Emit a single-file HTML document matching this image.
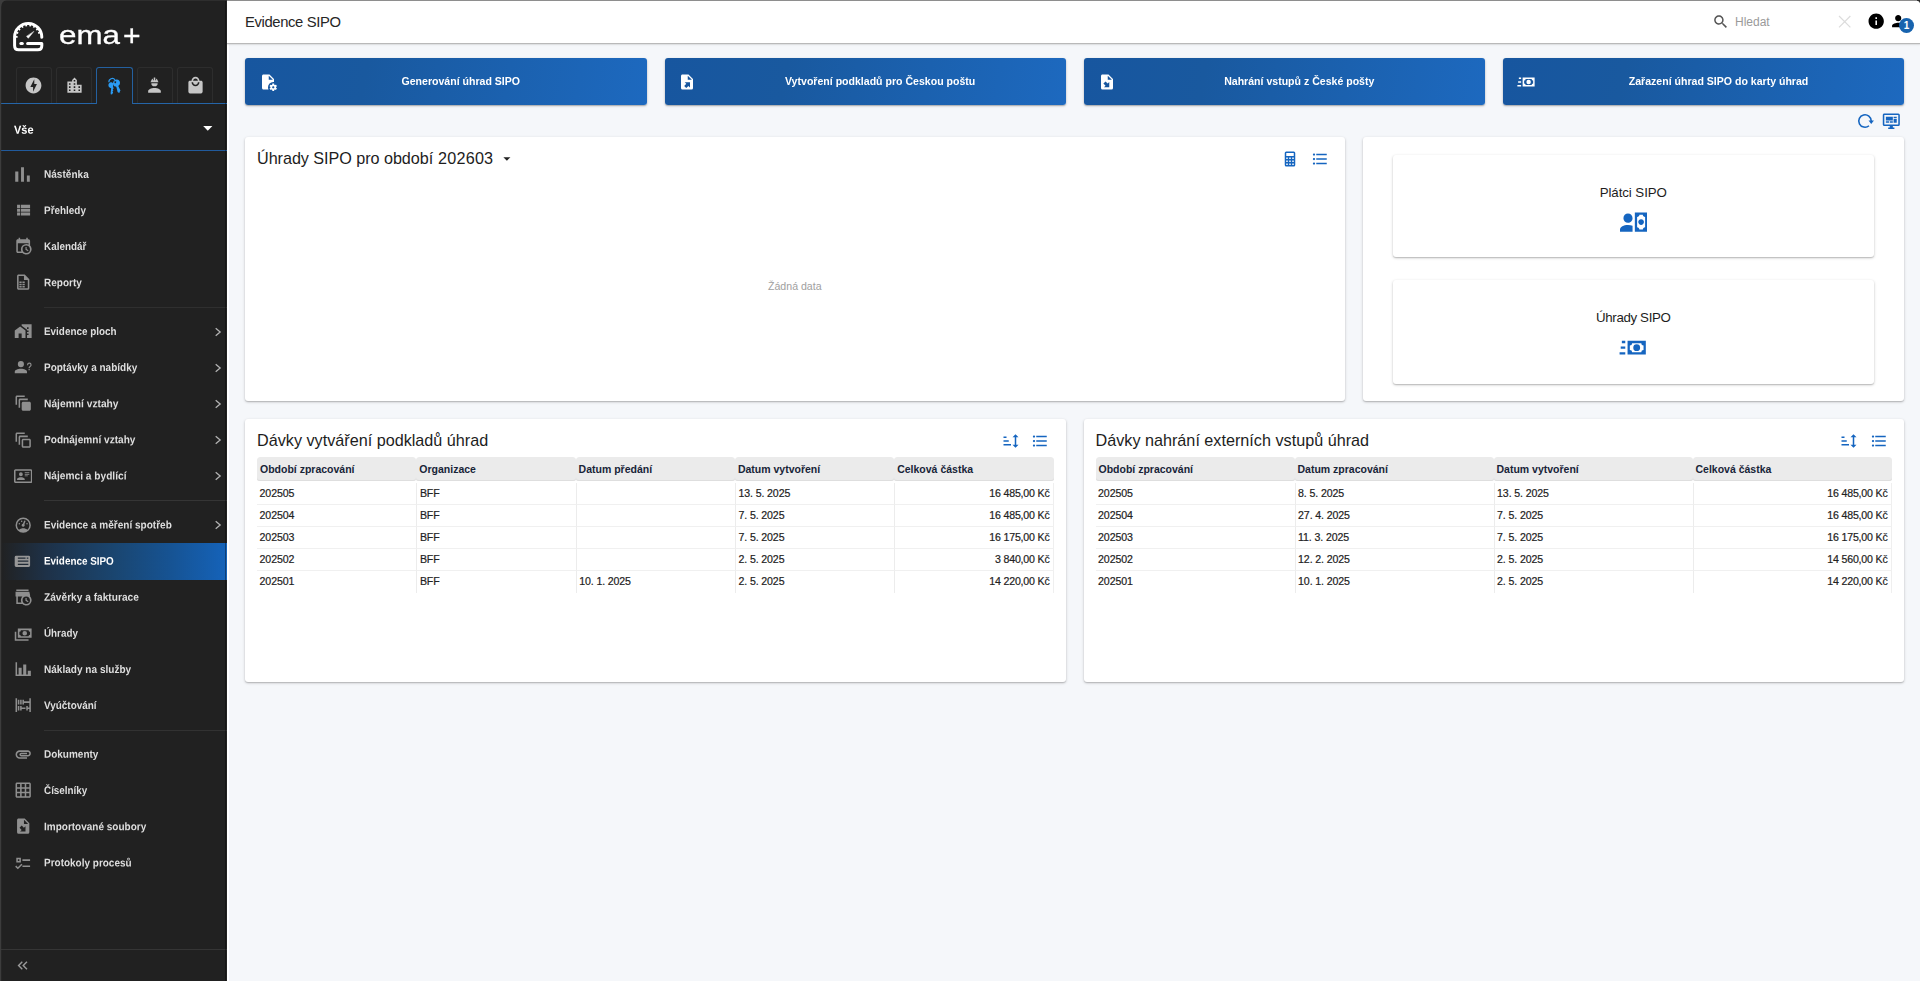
<!DOCTYPE html><html lang="cs"><head><meta charset="utf-8"><title>Evidence SIPO</title><style>
*{box-sizing:border-box;margin:0;padding:0}
html,body{width:1920px;height:981px;overflow:hidden}
body{background:#f5f7fa;font-family:"Liberation Sans",sans-serif;color:#1d1d1d;position:relative}
.i{position:absolute;display:block}
.abs{position:absolute}
.t{position:absolute;white-space:nowrap;line-height:1;transform-origin:left center}
#side{position:absolute;left:0;top:0;width:227.2px;height:981px;background:#212121;overflow:hidden;filter:opacity(1)}
#frame{position:absolute;left:0;top:0;width:1920px;height:981px;pointer-events:none}
.mi{position:absolute;left:43.6px;color:#dedede;font-weight:700;font-size:11px;line-height:14px;height:14px;white-space:nowrap;transform-origin:left center;transform:scaleX(.905)}
.sep{position:absolute;left:43.7px;right:0;height:1.1px;background:#343434}
.chev{position:absolute;left:213.9px;width:8px;height:12px}
#top{position:absolute;left:227px;top:1px;width:1693px;height:41.5px;background:#fff;box-shadow:0 1.2px 0 #b9b9b9,0 2px 2px rgba(0,0,0,.07)}
.btn{position:absolute;top:58.4px;height:46.9px;width:401.2px;border-radius:3px;background:linear-gradient(100deg,#17569f 0%,#19599f 30%,#1d69bf 100%);box-shadow:0 1px 2.5px rgba(0,0,0,.24),0 1px 1px rgba(0,0,0,.14);color:#fff}
.btn .lbl{position:absolute;left:30px;right:0;top:0;height:100%;display:flex;align-items:center;justify-content:center;font-weight:700;font-size:11px;white-space:nowrap;padding-bottom:2.2px}
.btn .lbl span{display:inline-block;transform:scaleX(.96)}
.card{position:absolute;background:#fff;border-radius:3px;box-shadow:0 1px 3px rgba(0,0,0,.22),0 1px 1px rgba(0,0,0,.12)}
.h{position:absolute;font-size:16.2px;line-height:20px;color:#1d1d1d;white-space:nowrap}
table{border-collapse:separate;border-spacing:0;position:absolute;table-layout:fixed;font-size:10.6px;letter-spacing:-.12px;color:#222}
th{background:#ebebeb;background-clip:padding-box;text-align:left;font-weight:700;height:25.5px;padding:0 3px 0.5px 3px;border-radius:3px 3px 3px 3px;border-bottom:2px solid transparent;box-shadow:inset 0 -1px 0 #dedede;font-size:10.5px;letter-spacing:0;color:#182438;white-space:nowrap}
td{height:22px;padding:0 3px 0 2.6px;-webkit-text-stroke:.2px #222;border-bottom:1px solid #f0f0f0;border-left:1px solid #ececec;white-space:nowrap}
td:first-child{border-left:none}
tr:last-child td{border-bottom:none;height:22.6px;padding-bottom:1.6px}
td.r{text-align:right;word-spacing:.2px;letter-spacing:-.22px;border-right:1px solid #efefef}
</style></head><body>
<div class="abs" style="left:227px;top:43px;width:2.6px;height:938px;background:linear-gradient(90deg,#fff 0%,#fff 65%,#f1f2f8 85%,#f5f7fa 100%)"></div>
<div id="top"></div>
<div class="t" style="left:245px;top:15.1px;font-size:14.8px;letter-spacing:-.36px;color:#262626">Evidence SIPO</div>
<svg class="i" style="left:1712.25px;top:12.75px;width:17.5px;height:17.5px" viewBox="0 0 24 24" fill="#555"><path d="M15.5 14h-.79l-.28-.27C15.41 12.59 16 11.11 16 9.5 16 5.91 13.09 3 9.5 3S3 5.91 3 9.5 5.91 16 9.5 16c1.61 0 3.09-.59 4.23-1.57l.27.28v.79l5 4.99L20.49 19l-4.99-5zm-6 0C7.01 14 5 11.99 5 9.5S7.01 5 9.5 5 14 7.01 14 9.5 11.99 14 9.5 14z"/></svg>
<div class="t" style="left:1735px;top:16px;font-size:12px;color:#9a9a9a">Hledat</div>
<svg class="i" style="left:1838px;top:15.2px;width:13.4px;height:13.4px" viewBox="0 0 13 13"><path d="M1 1L12 12M12 1L1 12" stroke="#dcdcdc" stroke-width="1.2" fill="none"/></svg>
<svg class="i" style="left:1867.10px;top:12.40px;width:18.4px;height:18.4px" viewBox="0 0 24 24" fill="#000"><path d="M12 2C6.48 2 2 6.48 2 12s4.48 10 10 10 10-4.48 10-10S17.52 2 12 2zm1 15h-2v-6h2v6zm0-8h-2V7h2v2z"/></svg>
<svg class="i" style="left:1888.80px;top:12.30px;width:18.4px;height:18.4px" viewBox="0 0 24 24" fill="#000"><path d="M12 12c2.21 0 4-1.79 4-4s-1.79-4-4-4-4 1.79-4 4 1.79 4 4 4zm0 2c-2.67 0-8 1.34-8 4v2h16v-2c0-2.66-5.33-4-8-4z"/></svg>
<div class="abs" style="left:1898.9px;top:17.9px;width:15.3px;height:15.3px;border-radius:8px;background:#1763ae;color:#fff;font-size:10px;font-weight:700;text-align:center;line-height:15.6px">1</div>
<div class="btn" style="left:245.4px"><svg class="i" style="left:13.60px;top:14.30px;width:18px;height:18px" viewBox="0 0 24 24" fill="#fff"><path d="M6 2C4.89 2 4 2.89 4 4V20C4 21.11 4.89 22 6 22H12.68A7 7 0 0 1 12 19A7 7 0 0 1 19 12A7 7 0 0 1 20 12.08V8L14 2H6M13 3.5L18.5 9H13V3.5M18 14C17.87 14 17.76 14.09 17.74 14.21L17.55 15.53C17.25 15.66 16.96 15.82 16.7 16L15.46 15.5C15.35 15.5 15.22 15.5 15.15 15.63L14.15 17.36C14.09 17.47 14.11 17.6 14.21 17.68L15.27 18.5C15.25 18.67 15.24 18.83 15.24 19C15.24 19.17 15.25 19.33 15.27 19.5L14.21 20.32C14.12 20.4 14.09 20.53 14.15 20.64L15.15 22.37C15.21 22.5 15.34 22.5 15.46 22.5L16.7 22C16.96 22.18 17.24 22.35 17.55 22.47L17.74 23.79C17.76 23.91 17.86 24 18 24H20C20.11 24 20.22 23.91 20.24 23.79L20.43 22.47C20.73 22.34 21 22.18 21.27 22L22.5 22.5C22.63 22.5 22.76 22.5 22.83 22.37L23.83 20.64C23.89 20.53 23.86 20.4 23.77 20.32L22.7 19.5C22.72 19.33 22.74 19.17 22.74 19C22.74 18.83 22.73 18.67 22.7 18.5L23.76 17.68C23.85 17.6 23.88 17.47 23.82 17.36L22.82 15.63C22.76 15.5 22.63 15.5 22.5 15.5L21.27 16C21 15.82 20.73 15.65 20.42 15.53L20.23 14.21C20.22 14.09 20.11 14 20 14H18M19 17.5C19.83 17.5 20.5 18.17 20.5 19C20.5 19.83 19.83 20.5 19 20.5C18.16 20.5 17.5 19.83 17.5 19C17.5 18.17 18.17 17.5 19 17.5Z"/></svg><div class="lbl"><span>Generování úhrad SIPO</span></div></div>
<div class="btn" style="left:664.8px"><svg class="i" style="left:13.60px;top:14.30px;width:18px;height:18px" viewBox="0 0 24 24" fill="#fff"><path d="M6,2C4.89,2 4,2.9 4,4V20A2,2 0 0,0 6,22H18A2,2 0 0,0 20,20V8L14,2M13,3.5L18.5,9H13M8.93,12.22H16V19.29L13.88,17.17L11.05,20L8.22,17.17L11.05,14.35"/></svg><div class="lbl"><span>Vytvoření podkladů pro Českou poštu</span></div></div>
<div class="btn" style="left:1084px"><svg class="i" style="left:13.60px;top:14.30px;width:18px;height:18px" viewBox="0 0 24 24" fill="#fff"><path d="M6,2C4.89,2 4,2.9 4,4V20A2,2 0 0,0 6,22H18A2,2 0 0,0 20,20V8L14,2M13,3.5L18.5,9H13M10.05,11.22L12.88,14.05L15,11.93V19H7.93L10.05,16.88L7.22,14.05"/></svg><div class="lbl"><span>Nahrání vstupů z České pošty</span></div></div>
<div class="btn" style="left:1503px"><svg class="i" style="left:13.60px;top:14.30px;width:18px;height:18px" viewBox="0 0 24 24" fill="#fff"><path d="M7.5,6H23.5V18H7.5V6M15.5,9A3,3 0 0,1 18.5,12A3,3 0 0,1 15.5,15A3,3 0 0,1 12.5,12A3,3 0 0,1 15.5,9M11.5,8A2,2 0 0,1 9.5,10V14A2,2 0 0,1 11.5,16H19.5A2,2 0 0,1 21.5,14V10A2,2 0 0,1 19.5,8H11.5M2.5,6H5.5V8H2.5V6M1.5,11H5.5V13H1.5V11M0.5,16H5.5V18H0.5V16Z"/></svg><div class="lbl"><span>Zařazení úhrad SIPO do karty úhrad</span></div></div>
<svg class="i" style="left:1856.00px;top:111.70px;width:18px;height:18px" viewBox="0 0 24 24" fill="#1565c0"><path d="M17.34 18.36A8.3 8.3 0 1 1 20.3 12" fill="none" stroke="#1565c0" stroke-width="2.1"/><path d="M16.7 11.3H23.9L20.3 16z"/></svg>
<svg class="i" style="left:1882.10px;top:111.60px;width:18.6px;height:18.6px" viewBox="0 0 24 24" fill="#1565c0"><path d="M21,16V4H3V16H21M21,2A2,2 0 0,1 23,4V16A2,2 0 0,1 21,18H14V20H16V22H8V20H10V18H3C1.89,18 1,17.1 1,16V4C1,2.89 1.89,2 3,2H21M5,6H14V11H5V6M15,6H19V8H15V6M19,9V14H15V9H19M5,12H9V14H5V12M10,12H14V14H10V12Z"/></svg>
<div class="card" style="left:245px;top:136.9px;width:1100.2px;height:263.9px"></div>
<div class="h" style="left:257px;top:148.1px"><span style="letter-spacing:-.05px">Úhrady SIPO pro období</span><span style="position:absolute;left:181px;top:0;letter-spacing:.22px">202603</span></div>
<svg class="i" style="left:503.4px;top:157.3px;width:7.8px;height:4.2px" viewBox="0 0 10 5"><path d="M0.5 0L5 4.6L9.5 0z" fill="#222"/></svg>
<svg class="i" style="left:1280.50px;top:150.00px;width:18px;height:18px" viewBox="0 0 24 24" fill="#1565c0"><path d="M7,2H17A2,2 0 0,1 19,4V20A2,2 0 0,1 17,22H7A2,2 0 0,1 5,20V4A2,2 0 0,1 7,2M7,4V8H17V4H7M7,10V12H9V10H7M11,10V12H13V10H11M15,10V12H17V10H15M7,14V16H9V14H7M11,14V16H13V14H11M15,14V16H17V14H15M7,18V20H9V18H7M11,18V20H13V18H11M15,18V20H17V18H15Z"/></svg>
<svg class="i" style="left:1310.50px;top:150.00px;width:18px;height:18px" viewBox="0 0 24 24" fill="#1565c0"><path d="M4 10.5c-.83 0-1.5.67-1.5 1.5s.67 1.5 1.5 1.5 1.5-.67 1.5-1.5-.67-1.5-1.5-1.5zm0-6c-.83 0-1.5.67-1.5 1.5S3.17 7.5 4 7.5 5.500 6.83 5.5 6 4.83 4.5 4 4.5zm0 12c-.83 0-1.5.68-1.5 1.5s.68 1.5 1.5 1.5 1.5-.68 1.5-1.5-.67-1.5-1.5-1.5zM7 19h14v-2H7v2zm0-6h14v-2H7v2zm0-8v2h14V5H7z"/></svg>
<div class="t" style="left:768px;top:281px;font-size:10.6px;color:#a0a0a0">Žádná data</div>
<div class="card" style="left:1363px;top:136.9px;width:540.7px;height:263.9px"></div>
<div class="card" style="left:1393px;top:154.5px;width:480.5px;height:102.9px"></div>
<div class="card" style="left:1393px;top:280.2px;width:480.5px;height:103.4px"></div>
<div class="abs" style="left:1393px;width:480.5px;top:184.7px;text-align:center;font-size:13.3px;letter-spacing:-.08px;line-height:16px;color:#1d1d1d">Plátci SIPO</div>
<svg class="i" style="left:1619.80px;top:208.90px;width:27.4px;height:27.4px" viewBox="0 0 24 24" fill="#1565c0"><path d="M11 8C11 10.21 9.21 12 7 12C4.79 12 3 10.21 3 8C3 5.79 4.79 4 7 4C9.21 4 11 5.79 11 8M11 14.72V20H0V18C0 15.79 3.13 14 7 14C8.5 14 9.87 14.27 11 14.72M24 20H13V3H24V20M16 11.5C16 10.12 17.12 9 18.5 9C19.88 9 21 10.12 21 11.5C21 12.88 19.88 14 18.5 14C17.12 14 16 12.88 16 11.5M22 7C20.9 7 20 6.11 20 5H17C17 6.11 16.11 7 15 7V16C16.11 16 17 16.9 17 18H20C20 16.9 20.9 16 22 16V7Z"/></svg>
<div class="abs" style="left:1393px;width:480.5px;top:309.7px;text-align:center;font-size:13.3px;letter-spacing:-.35px;line-height:16px;color:#1d1d1d">Úhrady SIPO</div>
<svg class="i" style="left:1619.20px;top:334.40px;width:27.4px;height:27.4px" viewBox="0 0 24 24" fill="#1565c0"><path d="M7.5,6H23.5V18H7.5V6M15.5,9A3,3 0 0,1 18.5,12A3,3 0 0,1 15.5,15A3,3 0 0,1 12.5,12A3,3 0 0,1 15.5,9M11.5,8A2,2 0 0,1 9.5,10V14A2,2 0 0,1 11.5,16H19.5A2,2 0 0,1 21.5,14V10A2,2 0 0,1 19.5,8H11.5M2.5,6H5.5V8H2.5V6M1.5,11H5.5V13H1.5V11M0.5,16H5.5V18H0.5V16Z"/></svg>
<div class="card" style="left:245px;top:418.6px;width:821px;height:263.6px"></div>
<div class="card" style="left:1084px;top:418.6px;width:819.7px;height:263.6px"></div>
<div class="h" style="left:257px;top:430px">Dávky vytváření podkladů úhrad</div>
<div class="h" style="left:1095.5px;top:430px">Dávky nahrání externích vstupů úhrad</div>
<svg class="i" style="left:1001.50px;top:431.50px;width:18px;height:18px" viewBox="0 0 24 24" fill="#1565c0"><path d="M2,6H6V8H2V6M2,11H9V13H2V11M2,16H12V18H2V16M18,3L22,7H19V17H22L18,21L14,17H17V7H14L18,3Z"/></svg>
<svg class="i" style="left:1031.00px;top:431.50px;width:18px;height:18px" viewBox="0 0 24 24" fill="#1565c0"><path d="M4 10.5c-.83 0-1.5.67-1.5 1.5s.67 1.5 1.5 1.5 1.5-.67 1.5-1.5-.67-1.5-1.5-1.5zm0-6c-.83 0-1.5.67-1.5 1.5S3.17 7.5 4 7.5 5.500 6.83 5.5 6 4.83 4.5 4 4.5zm0 12c-.83 0-1.5.68-1.5 1.5s.68 1.5 1.5 1.5 1.5-.68 1.5-1.5-.67-1.5-1.5-1.5zM7 19h14v-2H7v2zm0-6h14v-2H7v2zm0-8v2h14V5H7z"/></svg>
<svg class="i" style="left:1840.00px;top:431.50px;width:18px;height:18px" viewBox="0 0 24 24" fill="#1565c0"><path d="M2,6H6V8H2V6M2,11H9V13H2V11M2,16H12V18H2V16M18,3L22,7H19V17H22L18,21L14,17H17V7H14L18,3Z"/></svg>
<svg class="i" style="left:1869.50px;top:431.50px;width:18px;height:18px" viewBox="0 0 24 24" fill="#1565c0"><path d="M4 10.5c-.83 0-1.5.67-1.5 1.5s.67 1.5 1.5 1.5 1.5-.67 1.5-1.5-.67-1.5-1.5-1.5zm0-6c-.83 0-1.5.67-1.5 1.5S3.17 7.5 4 7.5 5.500 6.83 5.5 6 4.83 4.5 4 4.5zm0 12c-.83 0-1.5.68-1.5 1.5s.68 1.5 1.5 1.5 1.5-.68 1.5-1.5-.67-1.5-1.5-1.5zM7 19h14v-2H7v2zm0-6h14v-2H7v2zm0-8v2h14V5H7z"/></svg>
<table style="left:257px;top:457px;width:796.5px"><thead><tr><th>Období zpracování</th><th>Organizace</th><th>Datum předání</th><th>Datum vytvoření</th><th>Celková částka</th></tr></thead><tbody><tr><td>202505</td><td>BFF</td><td></td><td>13. 5. 2025</td><td class=r>16 485,00 Kč</td></tr><tr><td>202504</td><td>BFF</td><td></td><td>7. 5. 2025</td><td class=r>16 485,00 Kč</td></tr><tr><td>202503</td><td>BFF</td><td></td><td>7. 5. 2025</td><td class=r>16 175,00 Kč</td></tr><tr><td>202502</td><td>BFF</td><td></td><td>2. 5. 2025</td><td class=r>3 840,00 Kč</td></tr><tr><td>202501</td><td>BFF</td><td>10. 1. 2025</td><td>2. 5. 2025</td><td class=r>14 220,00 Kč</td></tr></tbody></table>
<table style="left:1095.5px;top:457px;width:796px"><thead><tr><th>Období zpracování</th><th>Datum zpracování</th><th>Datum vytvoření</th><th>Celková částka</th></tr></thead><tbody><tr><td>202505</td><td>8. 5. 2025</td><td>13. 5. 2025</td><td class=r>16 485,00 Kč</td></tr><tr><td>202504</td><td>27. 4. 2025</td><td>7. 5. 2025</td><td class=r>16 485,00 Kč</td></tr><tr><td>202503</td><td>11. 3. 2025</td><td>7. 5. 2025</td><td class=r>16 175,00 Kč</td></tr><tr><td>202502</td><td>12. 2. 2025</td><td>2. 5. 2025</td><td class=r>14 560,00 Kč</td></tr><tr><td>202501</td><td>10. 1. 2025</td><td>2. 5. 2025</td><td class=r>14 220,00 Kč</td></tr></tbody></table>
<div id="side">
<svg class="i" style="left:8px;top:16px;width:44px;height:40px" viewBox="8 16 44 40" fill="none" stroke="#fff" stroke-width="3" stroke-linecap="round" stroke-linejoin="round"><path d="M41.8 37.3A13.6 13.6 0 0 0 14.6 36.8V45.8Q14.6 49.8 18.6 49.8H37.8Q41.8 49.8 41.8 45.8V43.6H27.6"/><path d="M20.9 43.6H22.3"/><path d="M40.04 32.49L38.16 33.17M37.85 28.70L36.32 29.99M34.50 25.89L33.50 27.62M30.39 24.39L30.04 26.36M26.01 24.39L26.36 26.36M21.90 25.89L22.90 27.62M18.55 28.70L20.08 29.99M16.36 32.49L18.24 33.17M15.60 36.80L17.60 36.80" stroke-width="1.7" stroke-linecap="butt"/><path d="M26.7 36.5L28.3 38.3L33.6 31.7z" fill="#fff" stroke-width=".5"/></svg>
<div class="t" style="left:58.6px;top:23.2px;font-size:25.6px;color:#fff;-webkit-text-stroke:.3px #fff;transform:scaleX(1.225)">ema<span style="display:inline-block;margin-left:2.7px;transform:translateY(1.1px) scale(.96,1.16)">+</span></div>
<div class="abs" style="left:15.95px;top:67.2px;width:35.7px;height:36px;border:1px solid #2d2d2d;border-bottom:none;border-radius:3px 3px 0 0"></div>
<svg class="i" style="left:24.45px;top:76.30px;width:19px;height:19px" viewBox="0 0 24 24" fill="#c6c6c6"><path d="M12 2.02c-5.51 0-9.98 4.47-9.98 9.98s4.47 9.98 9.98 9.98 9.98-4.47 9.98-9.98S17.51 2.02 12 2.02zM11.48 20v-6.26H8L13 4v6.26h3.35L11.48 20z"/></svg>
<div class="abs" style="left:56.2px;top:67.2px;width:35.7px;height:36px;border:1px solid #2d2d2d;border-bottom:none;border-radius:3px 3px 0 0"></div>
<svg class="i" style="left:64.70px;top:76.30px;width:19px;height:19px" viewBox="0 0 24 24" fill="#c6c6c6"><path d="M19,15H17V13H19M19,19H17V17H19M13,7H11V5H13M13,11H11V9H13M13,15H11V13H13M13,19H11V17H13M7,11H5V9H7M7,15H5V13H7M7,19H5V17H7M15,11V5L12,2L9,5V7H3V21H21V11H15Z"/></svg>
<div class="abs" style="left:96px;top:66.8px;width:36.8px;height:37.5px;border:1.6px solid #24609f;border-bottom:none;border-radius:3px 3px 0 0;background:#212121;z-index:2"></div>
<svg class="i" style="left:108.4px;top:76.6px;width:12.8px;height:18px;z-index:3" viewBox="0 0 12.8 18" fill="#2a9bf4"><path d="M.9 5.2A3.4 3.4 0 0 1 7 2.8" fill="none" stroke="#2a9bf4" stroke-width="1.1"/><path d="M2.9 5.2C4.4 4.9 5.3 6 5.2 7.4C5.1 8.5 4.9 9.3 5.3 10.2L5.6 11.6L4.7 12.4L5.4 13.4L4.5 14.3L5.1 15.4L4.2 17.3L2.9 17.6L2.6 16.2L3.2 11.3C1.4 10.9.3 9.6.4 8C.5 6.5 1.5 5.5 2.9 5.200z"/><path d="M8.200 2.600C10.400 2.200 12 3.800 12 5.800C12 7.300 11.300 8.300 10.300 8.900L12.500 13.600L11.700 14.400L12.200 15.200L10.600 15.800L9.600 14.900L8.500 10.400L8 9.600C6.300 9.500 5 8.200 5 6.400C5 4.400 6.300 2.900 8.200 2.600zM7.300 4.300A.9.9 0 1 0 7.310 4.300z" fill-rule="evenodd"/></svg>
<div class="abs" style="left:136.95px;top:67.2px;width:35.7px;height:36px;border:1px solid #2d2d2d;border-bottom:none;border-radius:3px 3px 0 0"></div>
<svg class="i" style="left:145.45px;top:76.30px;width:19px;height:19px" viewBox="0 0 24 24" fill="#c6c6c6"><path d="M12,15C7.58,15 4,16.79 4,19V21H20V19C20,16.79 16.42,15 12,15M8,9A4,4 0 0,0 12,13A4,4 0 0,0 16,9M11.5,2C11.2,2 11,2.21 11,2.5V5.5H10V3C10,3 7.75,3.86 7.75,6.75C7.75,6.75 7,6.89 7,8H17C16.95,6.89 16.25,6.75 16.25,6.75C16.25,3.86 14,3 14,3V5.5H13V2.5C13,2.21 12.81,2 12.5,2H11.5Z"/></svg>
<div class="abs" style="left:177.2px;top:67.2px;width:35.7px;height:36px;border:1px solid #2d2d2d;border-bottom:none;border-radius:3px 3px 0 0"></div>
<svg class="i" style="left:185.70px;top:76.30px;width:19px;height:19px" viewBox="0 0 24 24" fill="#c6c6c6"><path d="M19 6h-2c0-2.76-2.24-5-5-5S7 3.24 7 6H5c-1.1 0-1.99.9-1.99 2L3 20c0 1.1.9 2 2 2h14c1.1 0 2-.9 2-2V8c0-1.1-.9-2-2-2zm-7-3c1.66 0 3 1.34 3 3H9c0-1.66 1.34-3 3-3zm0 10c-2.76 0-5-2.24-5-5h2c0 1.66 1.34 3 3 3s3-1.34 3-3h2c0 2.76-2.24 5-5 5z"/></svg>
<div class="abs" style="left:0;top:102.8px;width:97.5px;height:1.5px;background:#2565a8"></div>
<div class="abs" style="left:131.5px;top:102.8px;width:96px;height:1.5px;background:#2565a8"></div>
<div class="t" style="left:13.6px;top:124px;font-size:11.8px;font-weight:700;color:#fff;transform:translateY(.7px) scaleX(.93) skewY(.05deg)">Vše</div>
<svg class="i" style="left:203.1px;top:125.7px;width:9.6px;height:5px" viewBox="0 0 10 5"><path d="M0.2 0L5 4.9L9.8 0z" fill="#fff"/></svg>
<div class="abs" style="left:0;top:149.6px;width:227px;height:1.2px;background:#215a9c"></div>
<div class="abs" style="left:0;top:543.1px;width:227px;height:36.6px;background:linear-gradient(90deg,#212121 0%,#1e3147 20%,#1a456f 50%,#165393 75%,#1563ba 100%)"></div>
<svg class="i" style="left:10.20px;top:161.75px;width:25px;height:25px" viewBox="0 0 24 24" fill="#8f8f8f"><path d="M5 9.2h3V19H5zM10.6 5h2.8v14h-2.8zm5.6 8H19v6h-2.8z"/></svg>
<div class="mi" style="top:166px;transform:translateY(0.85px) scaleX(0.915) skewY(.05deg);">Nástěnka</div>
<svg class="i" style="left:13.50px;top:201.25px;width:18.4px;height:18.4px" viewBox="0 0 24 24" fill="#8f8f8f"><path d="M4 14h4v-4H4v4zm0 5h4v-4H4v4zM4 9h4V5H4v4zm5 5h12v-4H9v4zm0 5h12v-4H9v4zM9 5v4h12V5H9z"/></svg>
<div class="mi" style="top:202px;transform:translateY(0.95px) scaleX(0.903) skewY(.05deg);">Přehledy</div>
<svg class="i" style="left:13.50px;top:237.35px;width:18.4px;height:18.4px" viewBox="0 0 24 24" fill="#8f8f8f"><path d="M15,13H16.5V15.82L18.94,17.23L18.19,18.53L15,16.69V13M19,8H5V19H9.67C9.24,18.09 9,17.07 9,16A7,7 0 0,1 16,9C17.07,9 18.09,9.24 19,9.67V8M5,21C3.89,21 3,20.1 3,19V5C3,3.89 3.89,3 5,3H6V1H8V3H16V1H18V3H19A2,2 0 0,1 21,5V11.1C22.24,12.36 23,14.09 23,16A7,7 0 0,1 16,23C14.09,23 12.36,22.24 11.1,21H5M16,11.15A4.85,4.85 0 0,0 11.15,16C11.15,18.68 13.32,20.85 16,20.85A4.85,4.85 0 0,0 20.85,16C20.85,13.32 18.68,11.15 16,11.15Z"/></svg>
<div class="mi" style="top:239px;transform:translateY(0.05px) scaleX(0.899) skewY(.05deg);">Kalendář</div>
<svg class="i" style="left:13.50px;top:273.45px;width:18.4px;height:18.4px" viewBox="0 0 24 24" fill="#8f8f8f"><path d="M14 2H6C4.89 2 4 2.9 4 4V20C4 21.11 4.89 22 6 22H18C19.11 22 20 21.11 20 20V8L14 2M18 20H6V4H13V9H18V20M10 13H7V11H10V13M14 13H11V11H14V13M10 16H7V14H10V16M14 16H11V14H14V16M10 19H7V17H10V19M14 19H11V17H14V19Z"/></svg>
<div class="mi" style="top:275px;transform:translateY(0.15px) scaleX(0.912) skewY(.05deg);">Reporty</div>
<svg class="i" style="left:13.50px;top:322.25px;width:18.4px;height:18.4px" viewBox="0 0 24 24" fill="#8f8f8f"><path d="M1,11v10h5v-6h4v6h5V11L8,6L1,11z M10,3v1.97l7,5V11h2v2h-2v2h2v2h-2v4h6V3H10z M19,9h-2V7h2V9z"/></svg>
<div class="mi" style="top:323px;transform:translateY(0.95px) scaleX(0.899) skewY(.05deg);">Evidence ploch</div>
<svg class="chev" style="top:325.75px" viewBox="0 0 8 12"><path d="M1.7 2.2L6.2 6L1.7 9.8" stroke="#b4b4b4" stroke-width="1.25" fill="none"/></svg>
<svg class="i" style="left:13.50px;top:358.35px;width:18.4px;height:18.4px" viewBox="0 0 24 24" fill="#8f8f8f"><path d="M13,8A4,4 0 0,1 9,12A4,4 0 0,1 5,8A4,4 0 0,1 9,4A4,4 0 0,1 13,8M17,18V20H1V18C1,15.79 4.58,14 9,14C13.42,14 17,15.79 17,18M20.5,14.5V16H19V14.5H20.5M18.5,9.5H17V9A3,3 0 0,1 20,6A3,3 0 0,1 23,9C23,9.97 22.5,10.88 21.71,11.41L21.41,11.6C20.84,12 20.5,12.61 20.5,13.3V13.5H19V13.3C19,12.11 19.6,11 20.59,10.35L20.88,10.16C21.27,9.9 21.5,9.47 21.5,9A1.5,1.5 0 0,0 20,7.5A1.5,1.5 0 0,0 18.5,9V9.5Z"/></svg>
<div class="mi" style="top:360px;transform:translateY(0.05px) scaleX(0.908) skewY(.05deg);">Poptávky a nabídky</div>
<svg class="chev" style="top:361.85px" viewBox="0 0 8 12"><path d="M1.7 2.2L6.2 6L1.7 9.8" stroke="#b4b4b4" stroke-width="1.25" fill="none"/></svg>
<svg class="i" style="left:13.50px;top:394.45px;width:18.4px;height:18.4px" viewBox="0 0 24 24" fill="#8f8f8f"><path d="M4,2C2.89,2 2,2.89 2,4V14H4V4H14V2H4M8,6C6.89,6 6,6.89 6,8V18H8V8H18V6H8M12,10C10.89,10 10,10.89 10,12V20C10,21.11 10.89,22 12,22H20C21.11,22 22,21.11 22,20V12C22,10.89 21.11,10 20,10H12Z"/></svg>
<div class="mi" style="top:396px;transform:translateY(0.15px) scaleX(0.931) skewY(.05deg);">Nájemní vztahy</div>
<svg class="chev" style="top:397.95px" viewBox="0 0 8 12"><path d="M1.7 2.2L6.2 6L1.7 9.8" stroke="#b4b4b4" stroke-width="1.25" fill="none"/></svg>
<svg class="i" style="left:13.50px;top:430.55px;width:18.4px;height:18.4px" viewBox="0 0 24 24" fill="#8f8f8f"><path d="M4,2C2.89,2 2,2.89 2,4V14H4V4H14V2H4M8,6C6.89,6 6,6.89 6,8V18H8V8H18V6H8M20,12V20H12V12H20M20,10H12C10.89,10 10,10.89 10,12V20C10,21.11 10.89,22 12,22H20C21.11,22 22,21.11 22,20V12C22,10.89 21.11,10 20,10Z"/></svg>
<div class="mi" style="top:432px;transform:translateY(0.25px) scaleX(0.918) skewY(.05deg);">Podnájemní vztahy</div>
<svg class="chev" style="top:434.05px" viewBox="0 0 8 12"><path d="M1.7 2.2L6.2 6L1.7 9.8" stroke="#b4b4b4" stroke-width="1.25" fill="none"/></svg>
<svg class="i" style="left:13.50px;top:466.65px;width:18.4px;height:18.4px" viewBox="0 0 24 24" fill="#8f8f8f"><path d="M22,3H2C0.91,3.04 0.04,3.91 0,5V19C0.04,20.09 0.91,20.96 2,21H22C23.09,20.96 23.96,20.09 24,19V5C23.96,3.91 23.09,3.04 22,3M22,19H2V5H22V19M14,17V15.75C14,14.09 10.66,13.25 9,13.25C7.34,13.25 4,14.09 4,15.75V17H14M9,7A2.5,2.5 0 0,0 6.5,9.5A2.5,2.5 0 0,0 9,12A2.5,2.5 0 0,0 11.5,9.5A2.5,2.5 0 0,0 9,7M14,7V8H20V7H14M14,9V10H20V9H14M14,11V12H18V11H14"/></svg>
<div class="mi" style="top:468px;transform:translateY(0.35px) scaleX(0.924) skewY(.05deg);">Nájemci a bydlící</div>
<svg class="chev" style="top:470.15px" viewBox="0 0 8 12"><path d="M1.7 2.2L6.2 6L1.7 9.8" stroke="#b4b4b4" stroke-width="1.25" fill="none"/></svg>
<svg class="i" style="left:13.50px;top:515.80px;width:18.4px;height:18.4px" viewBox="0 0 24 24" fill="#8f8f8f"><path d="M12,2A10,10 0 0,0 2,12A10,10 0 0,0 12,22A10,10 0 0,0 22,12A10,10 0 0,0 12,2M12,4A8,8 0 0,1 20,12C20,14.4 19,16.5 17.3,18C15.9,16.7 14,16 12,16C10,16 8.2,16.7 6.7,18C5,16.5 4,14.4 4,12A8,8 0 0,1 12,4M14,5.89C13.62,5.9 13.26,6.15 13.1,6.54L11.81,9.77L11.71,10C11,10.13 10.41,10.6 10.14,11.26C9.73,12.29 10.23,13.45 11.26,13.86C12.29,14.27 13.45,13.77 13.86,12.74C14.12,12.08 14,11.32 13.57,10.76L13.67,10.5L14.96,7.29L14.97,7.26C15.17,6.75 14.92,6.17 14.41,5.96C14.28,5.91 14.15,5.89 14,5.89M10,6A1,1 0 0,0 9,7A1,1 0 0,0 10,8A1,1 0 0,0 11,7A1,1 0 0,0 10,6M7,9A1,1 0 0,0 6,10A1,1 0 0,0 7,11A1,1 0 0,0 8,10A1,1 0 0,0 7,9M17,9A1,1 0 0,0 16,10A1,1 0 0,0 17,11A1,1 0 0,0 18,10A1,1 0 0,0 17,9Z"/></svg>
<div class="mi" style="top:517px;transform:translateY(0.50px) scaleX(0.913) skewY(.05deg);">Evidence a měření spotřeb</div>
<svg class="chev" style="top:519.30px" viewBox="0 0 8 12"><path d="M1.7 2.2L6.2 6L1.7 9.8" stroke="#b4b4b4" stroke-width="1.25" fill="none"/></svg>
<svg class="i" style="left:14.30px;top:553.00px;width:16.8px;height:16.8px" viewBox="0 0 24 24" fill="#979797"><path d="M3,4H21A2,2 0 0,1 23,6V18A2,2 0 0,1 21,20H3A2,2 0 0,1 1,18V6A2,2 0 0,1 3,4M5.5,6.5V8.2H16.5V6.5H5.5M18.2,6.5V8.2H20.5V6.5H18.2M5.5,10.8V12.6H20.5V10.8H5.5M5.5,15.2V17H20.5V15.2H5.5Z"/></svg>
<div class="mi" style="top:553px;transform:translateY(0.60px) scaleX(0.899) skewY(.05deg);color:#fff">Evidence SIPO</div>
<svg class="i" style="left:13.50px;top:588.00px;width:18.4px;height:18.4px" viewBox="0 0 24 24" fill="#8f8f8f"><path d="M3,2H19V4H3V2M2,5H20L21,9.5V11.1C22.24,12.36 23,14.09 23,16A7,7 0 0,1 16,23C14.09,23 12.36,22.24 11.1,21H3V11H2V9L2,5M5,11V19H9.67C9.24,18.09 9,17.07 9,16C9,14.09 9.76,12.36 11,11.1V11H5M15,13H16.5V15.82L18.94,17.23L18.19,18.53L15,16.69V13M16,11.15A4.85,4.85 0 0,0 11.15,16C11.15,18.68 13.32,20.85 16,20.85A4.85,4.85 0 0,0 20.85,16C20.85,13.32 18.68,11.15 16,11.15Z"/></svg>
<div class="mi" style="top:589px;transform:translateY(0.70px) scaleX(0.923) skewY(.05deg);">Závěrky a fakturace</div>
<svg class="i" style="left:13.50px;top:624.10px;width:18.4px;height:18.4px" viewBox="0 0 24 24" fill="#8f8f8f"><path d="M5,6H23V18H5V6M14,9A3,3 0 0,1 17,12A3,3 0 0,1 14,15A3,3 0 0,1 11,12A3,3 0 0,1 14,9M9,8A2,2 0 0,1 7,10V14A2,2 0 0,1 9,16H19A2,2 0 0,1 21,14V10A2,2 0 0,1 19,8H9M1,10H3V20H19V22H1V10Z"/></svg>
<div class="mi" style="top:625px;transform:translateY(0.80px) scaleX(0.894) skewY(.05deg);">Úhrady</div>
<svg class="i" style="left:13.50px;top:660.20px;width:18.4px;height:18.4px" viewBox="0 0 24 24" fill="#8f8f8f"><path d="M22,21H2V3H4V19H6V10H10V19H12V6H16V19H18V14H22V21Z"/></svg>
<div class="mi" style="top:661px;transform:translateY(0.90px) scaleX(0.914) skewY(.05deg);">Náklady na služby</div>
<svg class="i" style="left:13.50px;top:696.30px;width:18.4px;height:18.4px" viewBox="0 0 24 24" fill="#8f8f8f"><path d="M5 5H7V11H5V5M10 5H8V11H10V5M5 19H7V13H5V19M10 13H8V19H10V17H15V15H10V13M2 21H4V3H2V21M20 3V7H13V5H11V11H13V9H20V15H18V13H16V19H18V17H20V21H22V3H20Z"/></svg>
<div class="mi" style="top:698px;transform:translateY(0.00px) scaleX(0.903) skewY(.05deg);">Vyúčtování</div>
<svg class="i" style="left:13.50px;top:745.10px;width:18.4px;height:18.4px" viewBox="0 0 24 24" fill="#8f8f8f"><path d="M2 12.5C2 9.46 4.46 7 7.5 7H18c2.21 0 4 1.79 4 4s-1.79 4-4 4H9.5C8.12 15 7 13.88 7 12.5S8.12 10 9.5 10H17v2H9.41c-.55 0-.55 1 0 1H18c1.1 0 2-.9 2-2s-.9-2-2-2H7.5C5.57 9 4 10.57 4 12.5S5.57 16 7.5 16H17v2H7.5C4.46 18 2 15.54 2 12.5z"/></svg>
<div class="mi" style="top:746px;transform:translateY(0.80px) scaleX(0.908) skewY(.05deg);">Dokumenty</div>
<svg class="i" style="left:13.50px;top:781.30px;width:18.4px;height:18.4px" viewBox="0 0 24 24" fill="#8f8f8f"><path d="M20 2H4c-1.1 0-2 .9-2 2v16c0 1.1.9 2 2 2h16c1.1 0 2-.9 2-2V4c0-1.1-.9-2-2-2zM8 20H4v-4h4v4zm0-6H4v-4h4v4zm0-6H4V4h4v4zm6 12h-4v-4h4v4zm0-6h-4v-4h4v4zm0-6h-4V4h4v4zm6 12h-4v-4h4v4zm0-6h-4v-4h4v4zm0-6h-4V4h4v4z"/></svg>
<div class="mi" style="top:783px;transform:translateY(0.00px) scaleX(0.897) skewY(.05deg);">Číselníky</div>
<svg class="i" style="left:13.50px;top:817.45px;width:18.4px;height:18.4px" viewBox="0 0 24 24" fill="#8f8f8f"><path d="M6,2C4.89,2 4,2.9 4,4V20A2,2 0 0,0 6,22H18A2,2 0 0,0 20,20V8L14,2M13,3.5L18.5,9H13M10.05,11.22L12.88,14.05L15,11.93V19H7.93L10.05,16.88L7.22,14.05"/></svg>
<div class="mi" style="top:819px;transform:translateY(0.15px) scaleX(0.909) skewY(.05deg);">Importované soubory</div>
<svg class="i" style="left:13.50px;top:853.65px;width:18.4px;height:18.4px" viewBox="0 0 24 24" fill="#8f8f8f"><path d="M3,5H9V11H3V5M5,7V9H7V7H5M11,7H21V9H11V7M11,15H21V17H11V15M5,20L1.5,16.5L2.91,15.09L5,17.17L9.59,12.59L11,14L5,20Z"/></svg>
<div class="mi" style="top:855px;transform:translateY(0.35px) scaleX(0.907) skewY(.05deg);">Protokoly procesů</div>
<div class="sep" style="top:306.9px;background:#2f2f2f"></div>
<div class="sep" style="top:500.2px;background:#353535"></div>
<div class="sep" style="top:730.3px;background:#323232"></div>
<div class="abs" style="left:0;top:948.9px;width:227px;height:1px;background:#353535"></div>
<svg class="i" style="left:14.00px;top:956.50px;width:17px;height:17px" viewBox="0 0 24 24" fill="#9a9a9a"><path d="M17.59 18L19 16.59 14.42 12 19 7.41 17.59 6l-6 6z M11 18l1.41-1.41L7.83 12l4.58-4.59L11 6l-6 6z"/></svg>
<div class="abs" style="left:225.2px;top:1px;width:1.3px;height:980px;background:rgba(0,0,0,.35)"></div>
</div>
<svg id="frame" viewBox="0 0 1920 981"><rect x="227" y="0" width="1693" height="1" fill="#8e8e8e"/><rect x="0" y="0" width="227" height="1" fill="#2e2e2e"/><path d="M0 0H7Q1.2 1 1.2 7V981H0z" fill="#3c3c3c"/><path d="M1920 0V3.200Q1919.500 1 1917 .800V0z" fill="#2a2a2a"/></svg>
</body></html>
